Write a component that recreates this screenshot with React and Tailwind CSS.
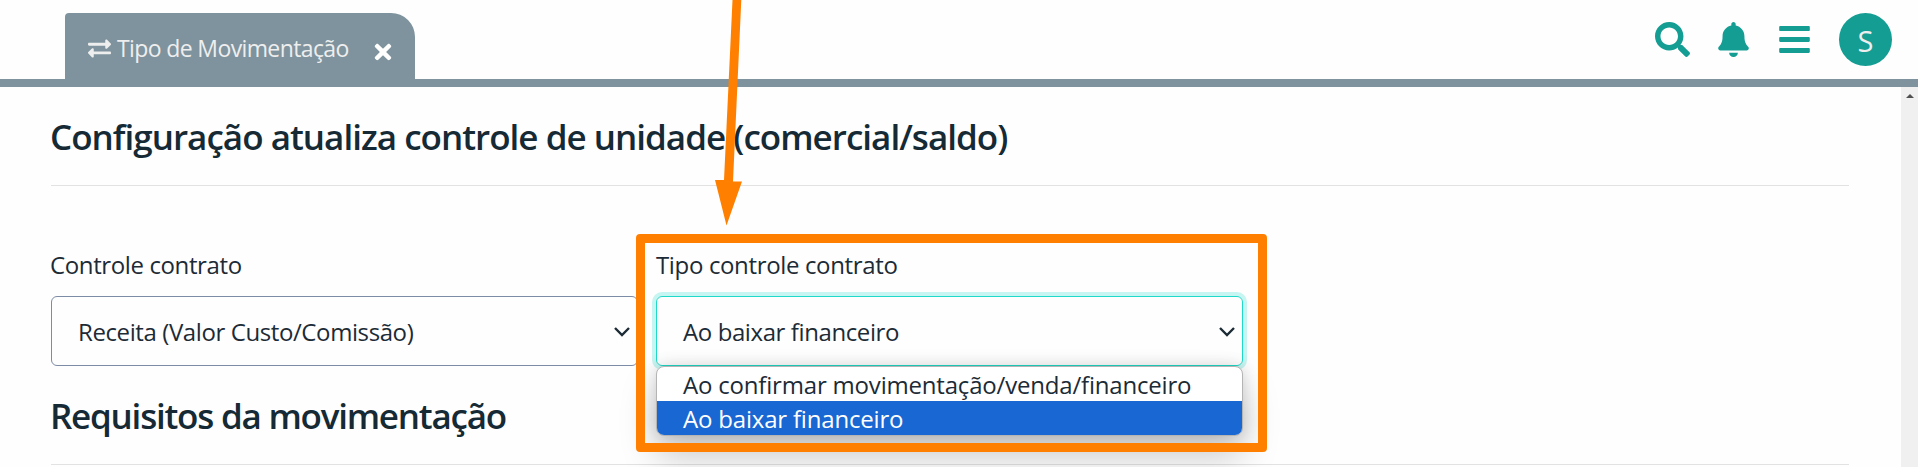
import { FaSearch, FaBell, FaBars, FaTimes, FaExchangeAlt } from "react-icons/fa";

function Chevron() {
  return (
    <svg className="mt-[2px] h-[12px] w-[18px] shrink-0" viewBox="0 0 18 12" fill="none" stroke="#1c2b36" strokeWidth="2.4">
      <path d="M2 2l7 7 7-7" />
    </svg>
  );
}

function Header() {
  return (
    <header className="flex h-[87px] items-end justify-between border-b-8 border-[#7e939d] pl-[65px] pr-[26px]">
      <div className="flex h-[66px] w-[350px] items-center rounded-tl rounded-tr-[24px] bg-[#7e939d] pl-[23px] text-[#eeeeee]">
        <FaExchangeAlt className="mt-[5px] h-[23px] w-[23px] shrink-0" />
        <span className="mt-[5px] ml-[6px] w-[257px] whitespace-nowrap text-[23px] tracking-[-0.62px]">Tipo de Movimentação</span>
        <FaTimes className="mt-[11px] h-6 w-[18px] shrink-0 text-white" />
      </div>
      <div className="flex h-[79px] items-center text-[#149d93]">
        <FaSearch className="mr-[28px] h-[35px] w-[35px]" />
        <FaBell className="mr-[30px] h-[35px] w-[31px]" />
        <FaBars className="mr-[29px] h-[35px] w-[31px]" />
        <div className="flex h-[53px] w-[53px] items-center justify-center rounded-full bg-[#149d93] text-[29px] text-[#eeeeee]">
          <span className="mt-[2px]">S</span>
        </div>
      </div>
    </header>
  );
}

function Menu() {
  return (
    <ul className="absolute -left-px top-[69px] z-10 w-[587px] overflow-hidden rounded-lg border border-[#b4b4b4] bg-white text-[24px] leading-[36px] tracking-[-0.19px] shadow-[0_20px_36px_rgba(0,0,0,0.22),0_0_16px_rgba(0,0,0,0.14)]">
      <li className="h-[34px] whitespace-nowrap pl-[26px]"><span>Ao confirmar movimentação/venda/financeiro</span></li>
      <li className="h-[34px] whitespace-nowrap bg-[#1967d2] pl-[26px] text-white"><span>Ao baixar financeiro</span></li>
    </ul>
  );
}

export default function App() {
  return (
    <div className="relative h-[467px] w-[1918px] overflow-hidden bg-[#fefefe] font-['Open_Sans',sans-serif] text-[#1c2b36]">
      <Header />
      <div className="flex h-[380px]">
        <main className="w-[1901px] pl-[51px] pr-[52px]">
          <h2 className="-ml-px h-[98px] pt-[26px] text-[35px] font-semibold leading-[48px] tracking-[-0.98px] text-[#152a35]"><span>Configuração atualiza controle de unidade (comercial/saldo)</span></h2>
          <div className="flex h-[181px] gap-[18px] border-t border-[#e2e2e2] pt-[60px]">
            <div className="w-[587px]">
              <label className="-ml-px block h-[50px] pt-[3px] text-[24px] leading-[32px] tracking-[-0.38px]"><span>Controle contrato</span></label>
              <div className="flex h-[70px] items-center justify-between rounded-md border border-[#7d8ca6] pl-[26px] pr-[6px] text-[24px] tracking-[-0.4px]">
                <span className="mt-[2px]">Receita (Valor Custo/Comissão)</span>
                <Chevron />
              </div>
            </div>
            <div className="w-[587px]">
              <label className="block h-[50px] pt-[3px] text-[24px] leading-[32px] tracking-[-0.35px]"><span>Tipo controle contrato</span></label>
              <div className="relative flex h-[70px] items-center justify-between rounded-md border border-[#20d9c8] pl-[26px] pr-[6px] text-[24px] tracking-[-0.4px] shadow-[0_0_0_4px_#c7f5f1]">
                <span className="mt-[2px]">Ao baixar financeiro</span>
                <Chevron />
                <Menu />
              </div>
            </div>
          </div>
          <h2 className="h-[99px] border-b border-[#e2e2e2] pt-[26px] text-[35px] font-semibold leading-[48px] tracking-[-1.23px] text-[#152a35]"><span className="-ml-px">Requisitos da movimentação</span></h2>
        </main>
        <div className="flex w-[17px] justify-center bg-[#f0f0f0] pt-[7px]">
          <svg className="h-[4px] w-[8px]" viewBox="0 0 8 4" fill="#505050"><path d="M0 4L4 0l4 4z" /></svg>
        </div>
      </div>
      <div className="absolute left-[636px] top-[234px] z-20 h-[218px] w-[631px] rounded border-[9px] border-[#ff8000]" />
      <svg className="absolute left-[700px] top-0 z-20 h-[230px] w-[60px]" viewBox="700 0 60 230">
        <path d="M732.5 0h8.8L733 181.500h9L726.500 225.500 715 180h9z" fill="#ff8000" />
      </svg>
    </div>
  );
}
